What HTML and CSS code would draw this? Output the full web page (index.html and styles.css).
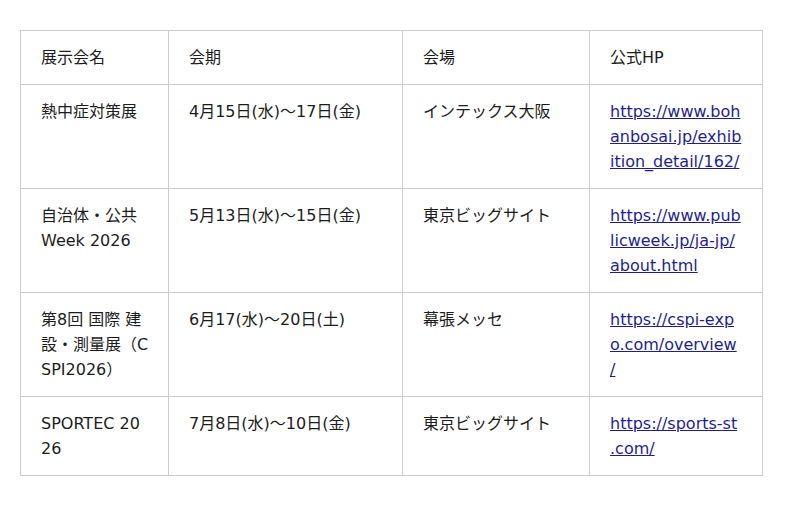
FILE: index.html
```html
<!DOCTYPE html>
<html lang="ja">
<head>
<meta charset="utf-8">
<link rel="stylesheet" href="styles.css">
</head>
<body>
<table class="expo">
  <colgroup>
    <col class="c1"><col class="c2"><col class="c3"><col class="c4">
  </colgroup>
  <tr>
    <td>展示会名</td><td>会期</td><td>会場</td><td>公式HP</td>
  </tr>
  <tr>
    <td>熱中症対策展</td>
    <td>4月15日(水)～17日(金)</td>
    <td>インテックス大阪</td>
    <td><a href="#">https://www.bohanbosai.jp/exhibition_detail/162/</a></td>
  </tr>
  <tr>
    <td>自治体・公共Week 2026</td>
    <td>5月13日(水)～15日(金)</td>
    <td>東京ビッグサイト</td>
    <td><a href="#">https://www.publicweek.jp/ja-jp/about.html</a></td>
  </tr>
  <tr>
    <td>第8回 国際 建設・測量展（CSPI2026）</td>
    <td>6月17(水)～20日(土)</td>
    <td>幕張メッセ</td>
    <td><a href="#">https://cspi-expo.com/overview/</a></td>
  </tr>
  <tr>
    <td>SPORTEC 2026</td>
    <td>7月8日(水)～10日(金)</td>
    <td>東京ビッグサイト</td>
    <td><a href="#">https://sports-st.com/</a></td>
  </tr>
</table>
</body>
</html>
```
FILE: styles.css
```css
html, body {
  margin: 0;
  padding: 0;
  background: #ffffff;
}
body {
  padding: 30px 20px;
  font-family: "DejaVu Sans", "Noto Sans CJK JP", sans-serif;
  font-size: 16px;
  line-height: 25px;
  color: #1c1c1c;
}
.expo {
  border-collapse: collapse;
  table-layout: fixed;
  width: 742px;
}
.c1 { width: 148px; }
.c2 { width: 234px; }
.c3 { width: 187px; }
.c4 { width: 173px; }
.expo td {
  border: 1px solid #cccccc;
  padding: 14px 20px;
  vertical-align: top;
  text-align: left;
  line-break: anywhere;
  overflow-wrap: anywhere;
}
.expo td:first-child {
  padding-right: 18px;
}
.expo a {
  color: #1e1e92;
  text-decoration: underline;
}
```
